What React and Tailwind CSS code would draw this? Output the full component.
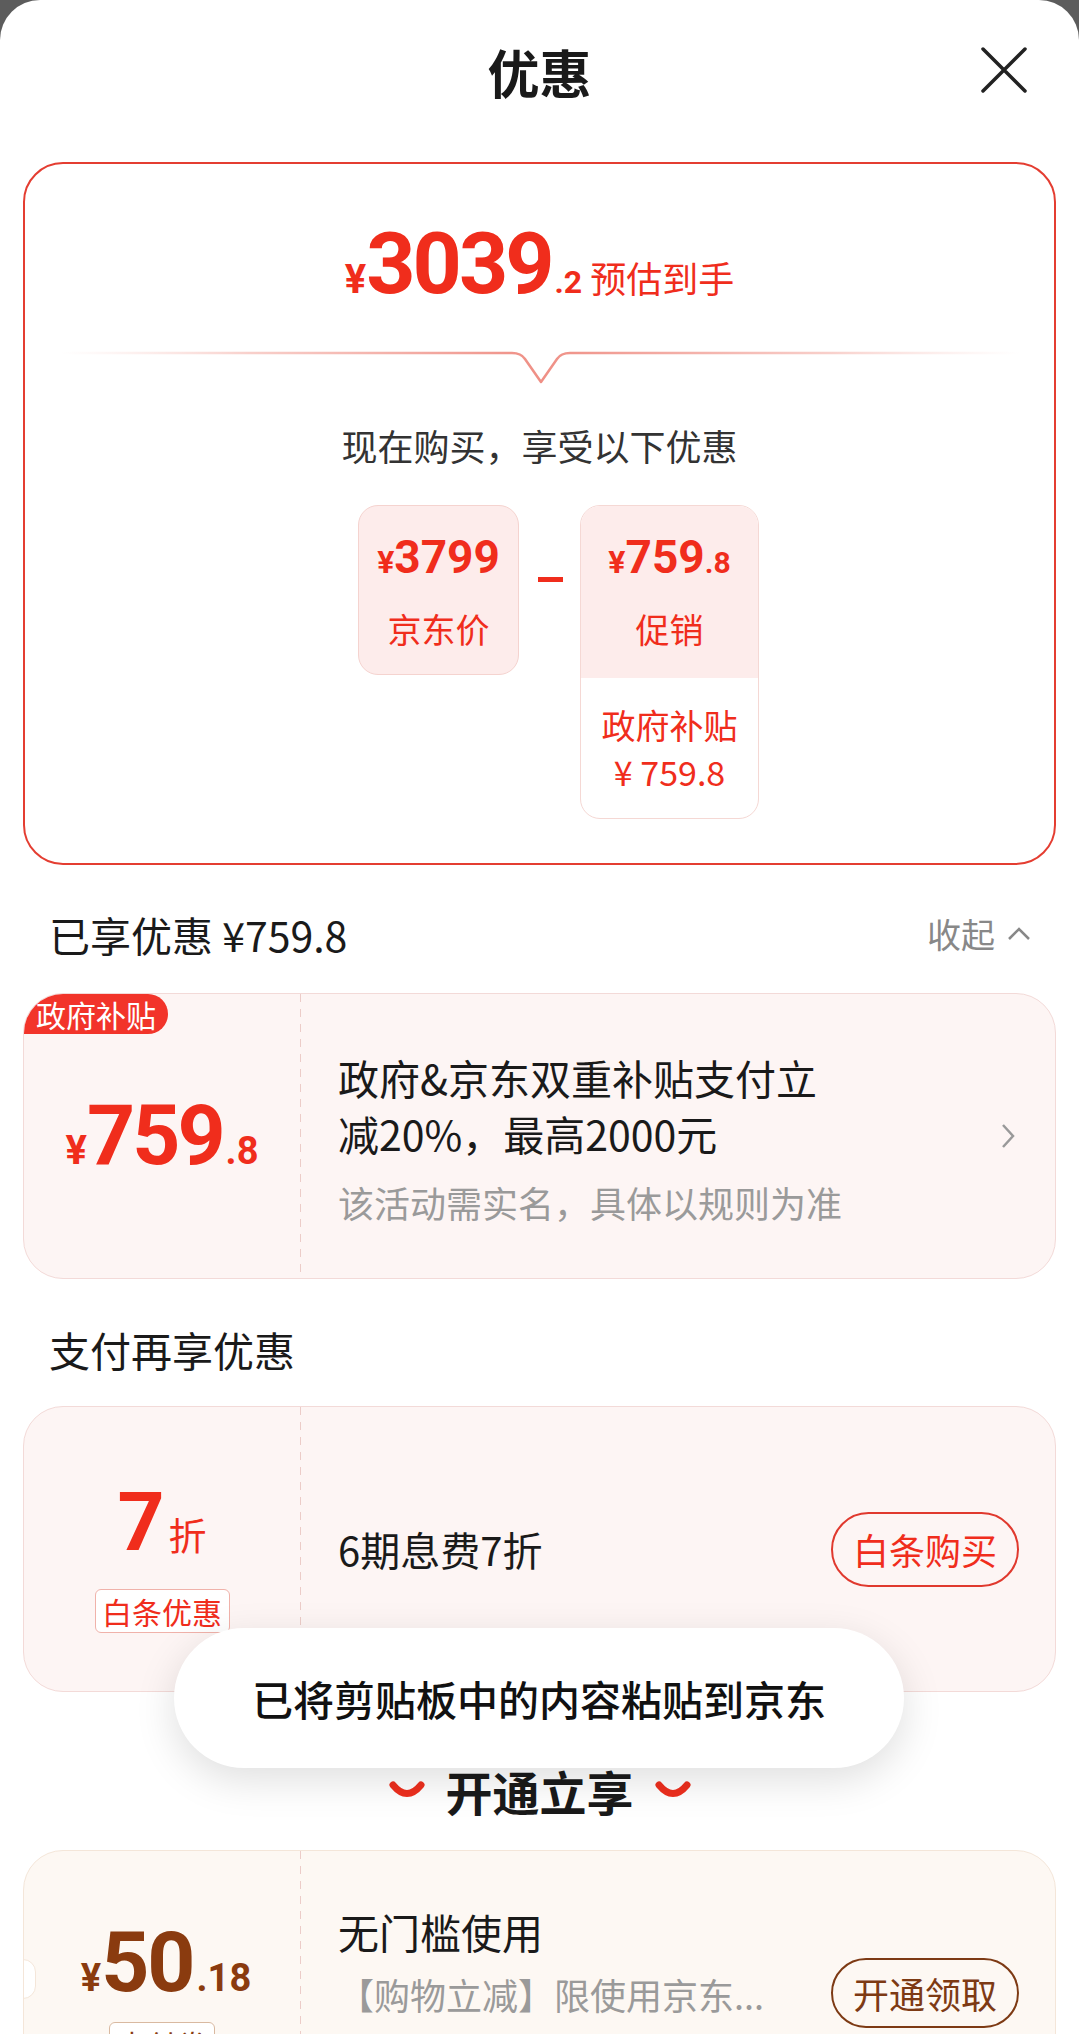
import React from "react";

const RED = "text-[#f02d1c]";

function PriceDivider() {
  return (
    <svg width="960" height="34" viewBox="0 0 960 34" fill="none">
      <defs>
        <linearGradient id="dv" x1="0" y1="0" x2="960" y2="0" gradientUnits="userSpaceOnUse">
          <stop offset="0" stopColor="#fbe1de" stopOpacity="0" />
          <stop offset="0.2" stopColor="#f8cfca" />
          <stop offset="0.5" stopColor="#ef8f85" />
          <stop offset="0.8" stopColor="#f8cfca" />
          <stop offset="1" stopColor="#fbe1de" stopOpacity="0" />
        </linearGradient>
      </defs>
      <path
        d="M0 2 H452 Q461 2 465 8 L481 31 L497 8 Q501 2 510 2 H960"
        stroke="url(#dv)"
        strokeWidth="2.5"
        strokeLinejoin="round"
      />
    </svg>
  );
}

function Smile() {
  return (
    <svg width="38" height="20" viewBox="0 0 38 20" fill="none">
      <path d="M5 5 Q19 22 33 5" stroke="#ee2f1e" strokeWidth="7" strokeLinecap="round" />
    </svg>
  );
}

function Dashed() {
  return <div className="w-px self-stretch bg-[repeating-linear-gradient(to_bottom,#ecccc8_0_8px,transparent_8px_15px)]" />;
}

export default function App() {
  return (
    <div className="w-[1079px] h-[2034px] overflow-hidden bg-[#5c5c5c] font-['Noto_Sans_CJK_SC',sans-serif]">
      <div className="relative h-full bg-white rounded-t-[40px]">
        {/* header */}
        <div className="relative h-[144px] flex items-center justify-center">
          <h1 className="text-[52px] leading-none font-bold text-[#1a1a1a]">优惠</h1>
          <svg className="absolute right-[52px] top-[47px]" width="46" height="46" viewBox="0 0 46 46">
            <path d="M2 2 L44 44 M44 2 L2 44" stroke="#222" strokeWidth="3.5" strokeLinecap="round" />
          </svg>
        </div>

        {/* price summary */}
        <div className="mx-[23px] mt-[18px] h-[703px] border-2 border-[#e43d31] rounded-[40px] flex flex-col items-center">
          <div className={`mt-[57px] flex items-baseline ${RED} leading-none`}>
            <span className="font-['Roboto',sans-serif] font-bold text-[40px]">¥</span>
            <span className="font-['Roboto',sans-serif] font-bold text-[86px] tracking-[-3px]">3039</span>
            <span className="font-['Roboto',sans-serif] font-bold text-[32px] ml-[3px]">.2</span>
            <span className="text-[36px] ml-[8px]">预估到手</span>
          </div>
          <div className="mt-[44px]">
            <PriceDivider />
          </div>
          <p className="mt-[38px] text-[36px] leading-[44px] text-[#333]">现在购买，享受以下优惠</p>

          <div className="mt-[38px] w-full flex items-start justify-center pl-[38px]">
            <div className="w-[161px] h-[170px] rounded-[20px] bg-[#fdeceb] border border-[#f5d3cf] flex flex-col items-center">
              <div className={`mt-[28px] flex items-baseline leading-none font-['Roboto',sans-serif] font-bold ${RED}`}>
                <span className="text-[32px]">¥</span>
                <span className="text-[46px]">3799</span>
              </div>
              <span className={`mt-[29px] text-[34px] leading-[40px] ${RED}`}>京东价</span>
            </div>
            <div className="mt-[72px] ml-[19px] mr-[17px] w-[25px] h-[5px] bg-[#f02d1c]" />
            <div className="w-[179px] h-[314px] rounded-[20px] border border-[#f5d8d4] overflow-hidden flex flex-col">
              <div className="h-[172px] bg-[#fdeceb] flex flex-col items-center">
                <div className={`mt-[28px] flex items-baseline leading-none font-['Roboto',sans-serif] font-bold ${RED}`}>
                  <span className="text-[32px]">¥</span>
                  <span className="text-[46px]">759</span>
                  <span className="text-[30px]">.8</span>
                </div>
                <span className={`mt-[29px] text-[34px] leading-[40px] ${RED}`}>促销</span>
              </div>
              <div className={`pt-[27px] flex flex-col items-center text-[34px] leading-[40px] ${RED}`}>
                <span>政府补贴</span>
                <span className="mt-[7px]">¥ 759.8</span>
              </div>
            </div>
          </div>
        </div>

        {/* enjoyed */}
        <div className="mt-[45px] h-[48px] flex items-center justify-between pl-[49px] pr-[48px]">
          <span className="text-[41px] leading-[48px] text-[#1a1a1a]">已享优惠 ¥759.8</span>
          <div className="flex items-center text-[#888]">
            <span className="text-[34px] leading-[48px]">收起</span>
            <svg className="ml-[12px]" width="24" height="14" viewBox="0 0 24 14" fill="none">
              <path d="M2 12 L12 2 L22 12" stroke="#888" strokeWidth="2.5" />
            </svg>
          </div>
        </div>

        <div className="relative mx-[23px] mt-[35px] h-[286px] rounded-[40px] border border-[#f3dad8] bg-[#fdf5f4] overflow-hidden flex">
          <div className="absolute left-0 top-0 h-[40px] w-[144px] bg-[#f2342a] rounded-r-[20px] flex items-center justify-center text-white text-[30px] leading-none">
            政府补贴
          </div>
          <div className="w-[276px] flex items-center justify-center">
            <div className={`flex items-baseline leading-none font-['Roboto',sans-serif] font-bold ${RED}`}>
              <span className="text-[40px]">¥</span>
              <span className="text-[84px] tracking-[-3px]">759</span>
              <span className="text-[38px] ml-[3px]">.8</span>
            </div>
          </div>
          <Dashed />
          <div className="flex-1 flex items-center justify-between pl-[37px] pr-[40px]">
            <div>
              <p className="w-[500px] text-[41px] leading-[56px] text-[#1a1a1a]">政府&京东双重补贴支付立减20%，最高2000元</p>
              <p className="mt-[19px] text-[36px] leading-[44px] text-[#9a9a9a]">该活动需实名，具体以规则为准</p>
            </div>
            <svg width="14" height="26" viewBox="0 0 14 26" fill="none">
              <path d="M2 2 L12 13 L2 24" stroke="#999" strokeWidth="2.5" />
            </svg>
          </div>
        </div>

        {/* pay again */}
        <div className="mt-[46px] h-[48px] flex items-center pl-[49px]">
          <span className="text-[41px] leading-[48px] text-[#1a1a1a]">支付再享优惠</span>
        </div>

        <div className="mx-[23px] mt-[33px] h-[286px] rounded-[40px] border border-[#f3dad8] bg-[#fdf5f4] overflow-hidden flex">
          <div className="w-[276px] flex flex-col items-center pt-[74px]">
            <div className={`flex items-baseline leading-none ${RED}`}>
              <span className="font-['Roboto',sans-serif] font-bold text-[82px]">7</span>
              <span className="text-[38px] ml-[4px]">折</span>
            </div>
            <div className={`mt-[26px] w-[135px] h-[44px] border border-[#f0b2aa] rounded-[6px] bg-white flex items-center justify-center text-[30px] leading-none ${RED}`}>
              白条优惠
            </div>
          </div>
          <Dashed />
          <div className="flex-1 flex items-center justify-between pl-[37px] pr-[36px]">
            <span className="text-[40px] leading-[48px] text-[#1a1a1a]">6期息费7折</span>
            <div className={`w-[188px] h-[75px] rounded-full border-2 border-[#e0392e] flex items-center justify-center text-[36px] leading-none ${RED}`}>
              白条购买
            </div>
          </div>
        </div>

        {/* open and enjoy */}
        <div className="mt-[70px] h-[56px] flex items-center justify-center">
          <Smile />
          <span className="mx-[20px] text-[47px] leading-none font-bold text-[#1a1a1a]">开通立享</span>
          <Smile />
        </div>

        <div className="relative mx-[23px] mt-[32px] h-[286px] rounded-[40px] border border-[#f4e6d9] bg-[#fdf8f3] overflow-hidden flex">
          <div className="absolute left-[-14px] top-[108px] w-[26px] h-[40px] rounded-full bg-white border border-[#f4e6d9]" />
          <div className="w-[276px] flex flex-col items-center pt-[70px]">
            <div className="flex items-baseline leading-none font-['Roboto',sans-serif] font-bold text-[#8a3b0f] ml-[8px]">
              <span className="text-[38px]">¥</span>
              <span className="text-[84px] tracking-[-2px]">50</span>
              <span className="text-[38px] ml-[3px]">.18</span>
            </div>
            <div className="mt-[17px] w-[106px] h-[44px] border border-[#d9b9a0] rounded-[6px] bg-white flex items-center justify-center text-[30px] leading-none text-[#8a3b0f]">
              支付券
            </div>
          </div>
          <Dashed />
          <div className="flex-1 flex items-start justify-between pl-[37px] pr-[36px] pt-[52px]">
            <div>
              <p className="text-[41px] leading-[56px] text-[#1a1a1a]">无门槛使用</p>
              <p className="mt-[13px] text-[36px] leading-[44px] text-[#9a9a9a]">【购物立减】限使用京东...</p>
            </div>
            <div className="mt-[55px] w-[188px] h-[70px] rounded-full border-2 border-[#7d3a14] flex items-center justify-center text-[36px] leading-none text-[#7d3a14]">
              开通领取
            </div>
          </div>
        </div>

        {/* toast */}
        <div className="absolute left-[174px] top-[1628px] w-[730px] h-[140px] rounded-full bg-white shadow-[0_12px_40px_rgba(0,0,0,0.13)] flex items-center justify-center">
          <span className="text-[41px] leading-none font-medium text-[#111]">已将剪贴板中的内容粘贴到京东</span>
        </div>
      </div>
    </div>
  );
}
